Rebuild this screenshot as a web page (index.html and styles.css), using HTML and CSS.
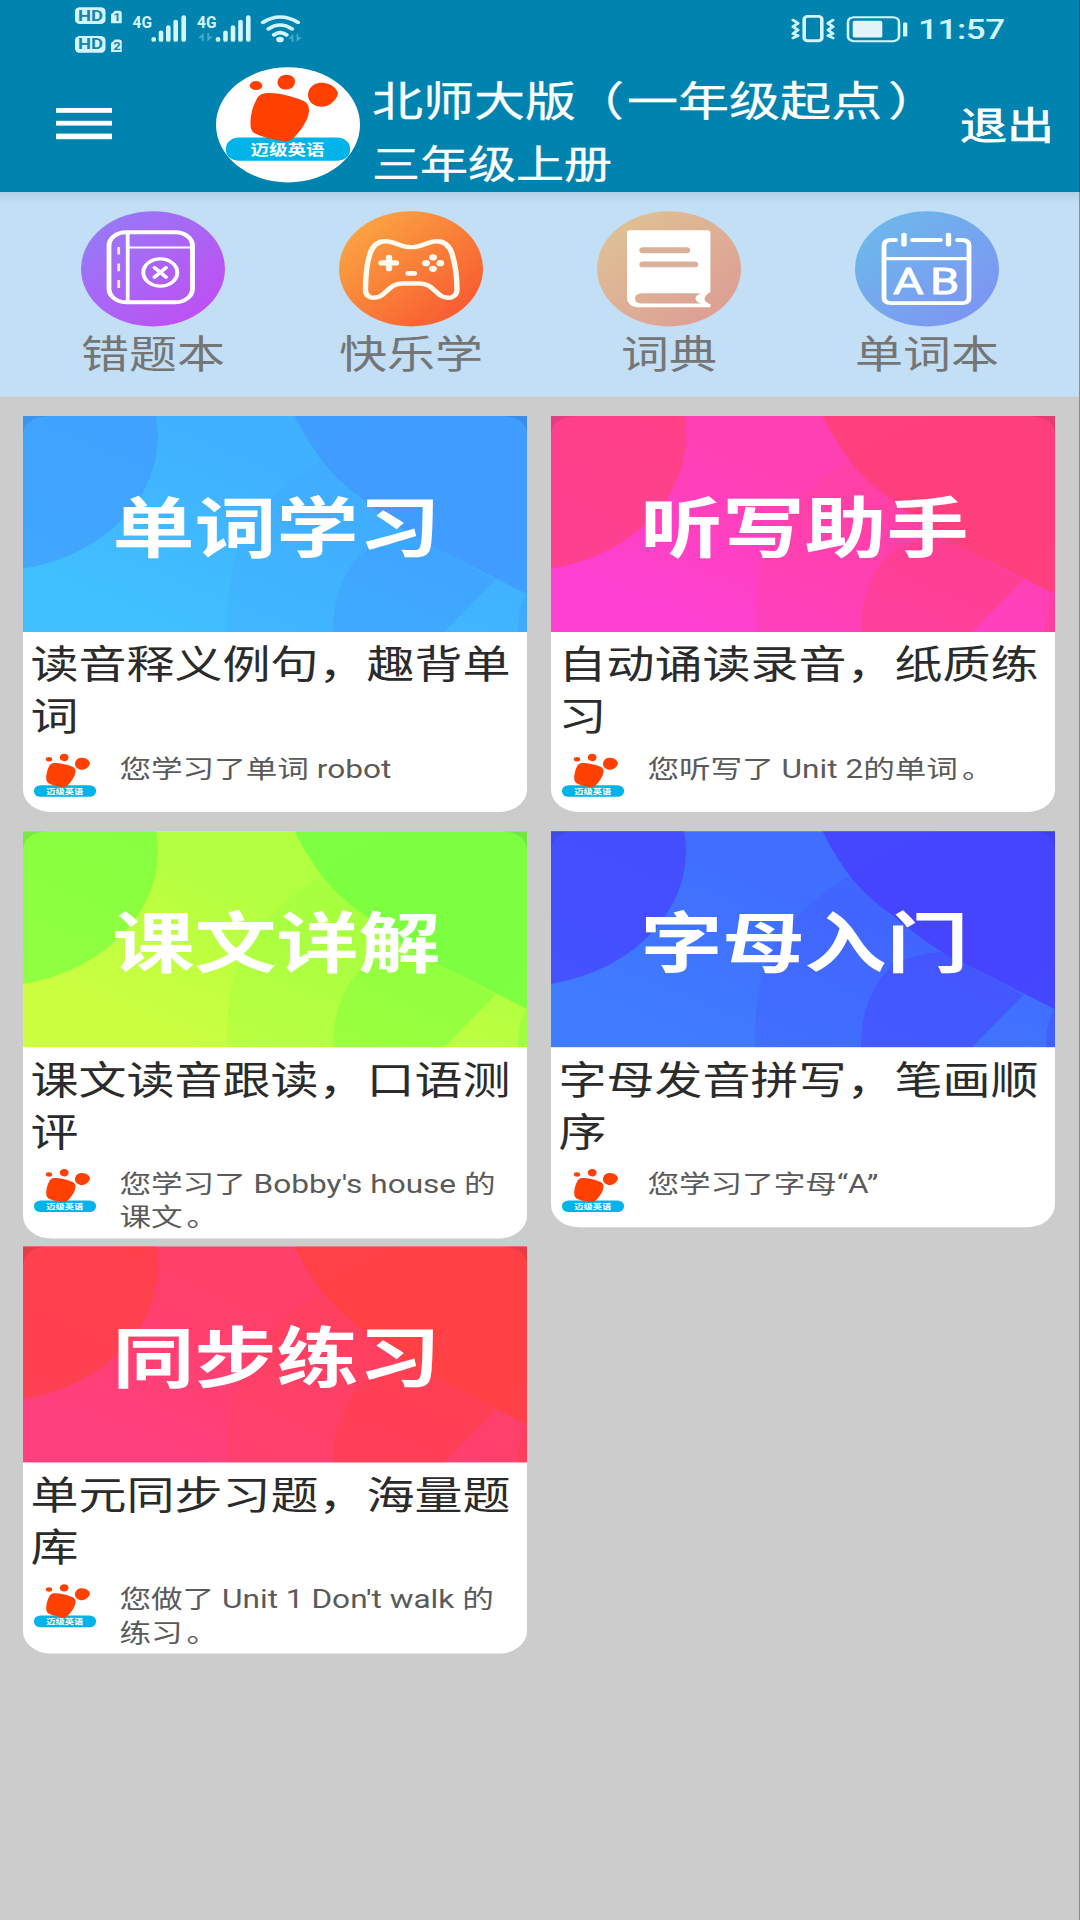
FILE: index.html
```html
<!DOCTYPE html>
<html lang="zh-CN">
<head>
<meta charset="utf-8">
<title>迈级英语</title>
<link rel="stylesheet" href="styles.css">
</head>
<body>
<svg class="defs" width="0" height="0" aria-hidden="true">
  <symbol id="logo" viewBox="0 0 144 144">
    <rect x="10" y="88" width="124" height="29" rx="13" fill="#00b4ea"/>
    <ellipse cx="40" cy="23" rx="6.3" ry="5.6" fill="#ff4000"/>
    <path d="M70 9.500c6 0 9 3.500 9 8.500s-3 10-8.500 10-9-4-9-9 3.500-9.500 8.500-9.500z" fill="#ff4000"/>
    <path d="M104 19.500C110 19 116 22 119 26C122 31 123 33 120.500 38C117 45 112 49.500 106 49.500C98 49.500 92 43 92 35C92 27 97 20 104 19.500z" fill="#ff4000"/>
    <path d="M54 32.300C62 32.300 74 36 82 39.500C90 42.500 93 46 93 54C93 66 83 82 77 89C73 93.500 68 93 60 91C52 89 45 87 39 83C34 79 34.500 73 34.500 67C35 57 37 48 41 39C44 33.500 47 32.300 54 32.300z" fill="#ff4000"/>
    <text class="logo-text" x="71.500" y="109.500" text-anchor="middle">迈级英语</text>
  </symbol>
  <symbol id="waves" viewBox="0 0 504 270" preserveAspectRatio="none">
    <circle cx="-34.600" cy="25" r="169.600" opacity=".66"/>
    <path d="M383 0C350 13 322 32 298 55C285 68 270 78 259 92C240 113 226 136 217 160C208 185 204 215 204 270H421L472 205L504 160V0z" opacity=".17"/>
    <path d="M271.600 0C276 12 287 36 298.500 55C308 71 325 91 341.500 105C361 126 385 149 410 163L504 222.500V0z" opacity=".78"/>
    <path d="M421 270L472 205L410 163L392 151C370 152 350 160 338 172C321 195 310 225 310 270z" opacity=".38"/>
    <path d="M504 222.500C498 232 495 248 495 270H504z" opacity=".35"/>
    <path d="M0 0H25Q0 2 0 25zM504 0H479Q504 2 504 25z" fill="#102040" opacity=".11"/>
  </symbol>
  <symbol id="arrows" viewBox="0 0 16 12"><path d="M0 7L6 0V12H4V7zM16 5L10 12V0H12V5z"/></symbol>
</svg>

<div class="screen">
  <header class="header">
    <div class="status">
      <svg class="status-left" viewBox="0 0 320 80" width="320" height="80">
        <g fill="#d3f5ff">
          <rect x="75" y="9" width="30.500" height="21" rx="5"/>
          <rect x="75" y="45" width="30.500" height="21" rx="5"/>
          <path d="M111 18L115 13.500H119Q121.700 13.500 121.700 16V29H111z"/>
          <path d="M111 54L115 49.500H119Q121.700 49.500 121.700 52V65H111z"/>
        </g>
        <g class="hd">
          <text x="78" y="25.700" textLength="25" lengthAdjust="spacingAndGlyphs">HD</text>
          <text x="78" y="61.700" textLength="25" lengthAdjust="spacingAndGlyphs">HD</text>
        </g>
        <g class="sim">
          <text x="113.200" y="26.500">1</text>
          <text x="113.200" y="62.500">2</text>
        </g>
        <g class="net">
          <text x="132.500" y="34.700" textLength="19.500" lengthAdjust="spacingAndGlyphs">4G</text>
          <text x="197" y="34.700" textLength="19.500" lengthAdjust="spacingAndGlyphs">4G</text>
        </g>
        <g class="bars">
          <path d="M153.700 48.500V50M161 40.500V50M168.300 34V50M175.700 27V50M183.700 21.500V50"/>
          <path d="M218 48.500V50M225.500 40.500V50M233 34V50M240.500 27V50M248.300 21.500V50"/>
        </g>
        <g fill="none" stroke="#d3f5ff" stroke-width="4.500" stroke-linecap="round">
          <path d="M263 28Q280 14.500 298 28"/>
          <path d="M268.500 36Q280 26.500 292 36"/>
          <path d="M274 43.500Q280 38 286.500 43.500"/>
        </g>
        <ellipse cx="280" cy="49.300" rx="3.800" ry="3.500" fill="#d3f5ff"/>
        <g fill="#4aa9c7">
          <use href="#arrows" x="198" y="41" width="15" height="11"/>
          <use href="#arrows" x="288" y="42.500" width="14" height="10"/>
        </g>
      </svg>
      <svg class="status-right" viewBox="784 0 130 80" width="130" height="80">
        <g fill="none" stroke="#d3f5ff" stroke-linecap="round" stroke-linejoin="round">
          <rect x="804.200" y="20.500" width="17.600" height="30.500" rx="3.500" stroke-width="3.600"/>
          <path stroke-width="3.200" d="M793 25l5 4-5 4.500 5 4-5 4.500 5 2.500-5 3M833 25l-5 4 5 4.500-5 4 5 4.500-5 2.500 5 3"/>
          <rect x="848" y="21.500" width="51" height="30" rx="6" stroke-width="2.600"/>
        </g>
        <rect x="852.700" y="26" width="29.600" height="21" rx="2" fill="#e4f4fb"/>
        <rect x="903" y="28" width="4.300" height="17.500" rx="1.500" fill="#d3f5ff"/>
      </svg>
      <time class="clock">11:57</time>
    </div>
    <div class="bar">
      <div class="menu"><i></i><i></i><i></i></div>
      <svg class="avatar"><use href="#logo"/></svg>
      <div class="book">
        <div class="book-edition">北师大版<span class="paren-open">（</span>一年级起点<span class="paren-close">）</span></div>
        <div class="book-grade">三年级上册</div>
      </div>
      <div class="exit">退出</div>
    </div>
  </header>

  <nav class="tools">
    <div class="tool">
      <div class="disc purple">
        <svg viewBox="0 0 144 144" fill="none" stroke="#fff">
          <rect x="28" y="26.300" width="83.500" height="87.500" rx="17" stroke-width="4.800"/>
          <path d="M46.700 27V114" stroke-width="3.800"/>
          <path d="M47 45.400H111" stroke-width="2.400"/>
          <path d="M37.700 44.600V54M37.700 65.400V75M37.700 86V96" stroke-width="2.800" opacity=".85"/>
          <circle cx="79.300" cy="76.700" r="17" stroke-width="4"/>
          <path d="M73.500 70.500L85 82.500M85 70.500L73.500 82.500" stroke-width="4" stroke-linecap="round"/>
        </svg>
      </div>
      <span class="tool-name">错题本</span>
    </div>
    <div class="tool">
      <div class="disc orange">
        <svg viewBox="0 0 144 144" fill="none" stroke="#fffaf0" stroke-linecap="round">
          <path stroke-width="5.400" d="M50 38C59 40 63 45 72 45S86 40 94 38C104 36 110 42 113 53C116 65 118 80 118 98C118 107 111 110 104 107C96 103 93 90 80 90.400H64C51 90 48 103 40 107C33 110 26 107 26.500 98C26.500 80 28 65 31 53C34 42 40 36 50 38z"/>
          <path stroke-width="6.400" d="M42.500 64.600H57M50 57.500V71.800"/>
          <path stroke-width="6" d="M69.500 77.800H75"/>
          <g fill="#fffaf0" stroke="none"><circle cx="94" cy="57.800" r="3.900"/><circle cx="94" cy="72" r="3.900"/><circle cx="87" cy="65" r="3.900"/><circle cx="101.300" cy="65" r="3.900"/></g>
        </svg>
      </div>
      <span class="tool-name">快乐学</span>
    </div>
    <div class="tool">
      <div class="disc tan">
        <svg viewBox="0 0 144 144" fill="#fff" fill-rule="evenodd">
          <path d="M33 23.800H110.500Q113.400 23.800 113.400 27V101Q107.500 105.500 107.500 109.500T113.400 116.500V120H40Q30 119 30 108V27Q30 23.800 33 23.800zM45 102.500Q38 103 38 109T45 115.400H104Q98.500 113 98.500 109T104 102.500z"/>
          <path d="M46 48.800H89.500M46 66.500H97.500" stroke="#dbb099" stroke-width="7.400" stroke-linecap="round"/>
        </svg>
      </div>
      <span class="tool-name">词典</span>
    </div>
    <div class="tool">
      <div class="disc blue">
        <svg viewBox="0 0 144 144" fill="none" stroke="#fff" stroke-width="4.800" stroke-linecap="round">
          <path d="M40.500 36H36Q29 36 29 43V108Q29 115 36 115H107Q114 115 114 108V43Q114 36 107 36H102.500M57.500 36H85.500"/>
          <path d="M49 29.500V41.500M93.500 29.500V41.500" stroke-width="5.400"/>
          <path d="M29 59.200H114" stroke-width="4" stroke-linecap="butt"/>
          <text class="ab" x="38" y="104">A</text>
          <text class="ab" x="75" y="104">B</text>
        </svg>
      </div>
      <span class="tool-name">单词本</span>
    </div>
  </nav>

  <main class="cards">
    <article class="card sky">
      <div class="banner"><svg class="waves"><use href="#waves"/></svg><h2>单词学习</h2></div>
      <p class="desc">读音释义例句，趣背单词</p>
      <div class="recent"><svg class="mini"><use href="#logo"/></svg><p>您学习了单词 robot</p></div>
    </article>
    <article class="card pink">
      <div class="banner"><svg class="waves"><use href="#waves"/></svg><h2>听写助手</h2></div>
      <p class="desc">自动诵读录音，纸质练习</p>
      <div class="recent"><svg class="mini"><use href="#logo"/></svg><p>您听写了 Unit 2的单词<span class="stop">。</span></p></div>
    </article>
    <article class="card lime">
      <div class="banner"><svg class="waves"><use href="#waves"/></svg><h2>课文详解</h2></div>
      <p class="desc">课文读音跟读，口语测评</p>
      <div class="recent"><svg class="mini"><use href="#logo"/></svg><p>您学习了 Bobby's house 的课文<span class="stop">。</span></p></div>
    </article>
    <article class="card indigo">
      <div class="banner"><svg class="waves"><use href="#waves"/></svg><h2>字母入门</h2></div>
      <p class="desc">字母发音拼写，笔画顺序</p>
      <div class="recent"><svg class="mini"><use href="#logo"/></svg><p>您学习了字母“A”</p></div>
    </article>
    <article class="card red">
      <div class="banner"><svg class="waves"><use href="#waves"/></svg><h2>同步练习</h2></div>
      <p class="desc">单元同步习题，海量题库</p>
      <div class="recent"><svg class="mini"><use href="#logo"/></svg><p>您做了 Unit 1 Don't walk 的练习<span class="stop">。</span></p></div>
    </article>
  </main>
</div>
</body>
</html>
```
FILE: styles.css
```css
* { box-sizing: border-box; margin: 0; padding: 0; }

html { overflow: hidden; }

body {
  width: 1080px;
  height: 1920px;
  overflow: hidden;
  background: #ccc;
  font-family: Roboto, "Noto Sans CJK SC", sans-serif;
}

.defs { display: block; width: 0; height: 0; }

/* A 1080x2400 phone screen shown at 1080x1920 */
.screen {
  width: 1080px;
  height: 2400px;
  margin-bottom: -480px;
  background: #ccc;
  border-right: 1px solid #8c8c8c;
  transform: scaleY(0.8);
  transform-origin: 0 0;
}

/* Header */
.header {
  width: 1080px;
  height: 240px;
  background: #0084af;
  color: #fff;
  border-right: 1px solid #075f7d;
}
.status { display: flex; height: 80px; }
.status-right { margin-left: 464px; }
.clock {
  margin-left: 4px;
  font-size: 35px;
  font-weight: 500;
  line-height: 76px;
  color: #d3f5ff;
  letter-spacing: -0.4px;
}
.hd { font: 700 18px Roboto, sans-serif; fill: #1686ab; }
.sim { font: 700 13px Roboto, sans-serif; fill: #1686ab; }
.net { font: 700 20px Roboto, sans-serif; fill: #d3f5ff; }
.bars { fill: none; stroke: #d3f5ff; stroke-width: 4.6px; stroke-linecap: round; }

.bar { display: flex; height: 160px; }
.menu {
  display: flex;
  flex: none;
  flex-direction: column;
  gap: 10px;
  width: 56px;
  margin: 54.5px 104px 0 56px;
}
.menu i { height: 6.4px; background: #fff; }
.avatar {
  flex: none;
  width: 144px;
  height: 144px;
  margin-top: 4px;
  border-radius: 50%;
  background: #fff;
}
.logo-text { font: 700 18.5px "Noto Sans CJK SC", sans-serif; fill: #fff; }
.book { flex: none; width: 600px; padding: 9px 0 0 12px; white-space: nowrap; }
.book-edition { font-size: 51px; line-height: 78px; -webkit-text-stroke: 0.4px #fff; }
.book-grade { font-size: 48px; line-height: 78px; -webkit-text-stroke: 0.4px #fff; }
.paren-open { margin: 0 3px 0 -3px; }
.paren-close { margin-left: 6px; }
.exit {
  flex: none;
  font-size: 47px;
  line-height: 155px;
  -webkit-text-stroke: 1px #fff;
}

/* Shortcuts */
.tools {
  display: flex;
  height: 256px;
  padding: 24px 0 0 24px;
  background: linear-gradient(#b0d0e6, #c2dff6 14px);
}
.tool {
  display: flex;
  flex: none;
  flex-direction: column;
  align-items: center;
  width: 258px;
}
.disc { width: 144px; height: 144px; border-radius: 50%; }
.disc svg { display: block; }
.purple { background: linear-gradient(135deg, #9180f8, #c549f1); }
.orange { background: linear-gradient(135deg, #fbb044, #f84f2e); }
.tan { background: linear-gradient(135deg, #dfc694, #dc9994); }
.blue { background: linear-gradient(135deg, #6abdea, #8090f3); }
.ab { font: 400 47px Roboto, sans-serif; fill: #fff; stroke: #fff; stroke-width: 1px; }
.tool-name { font-size: 48px; line-height: 71px; color: #757575; }

/* Lesson cards */
.cards {
  display: grid;
  grid-template-columns: 504px 504px;
  grid-auto-rows: 495px;
  gap: 24px;
  align-items: start;
  padding: 24px 0 0 23.4px;
}
.card {
  min-height: 495px;
  background: #fff;
  border-radius: 0 0 28px 28px;
}
.banner {
  display: grid;
  height: 270px;
  background: linear-gradient(28deg, var(--light) 15%, var(--mid) 62%);
}
.banner > * { grid-area: 1 / 1; }
.waves { width: 504px; height: 270px; fill: var(--dark); }
.banner h2 {
  position: relative;
  padding: 7px 0 0 2px;
  text-align: center;
  font-size: 82px;
  font-weight: 700;
  line-height: 270px;
  color: #fff;
}
.sky { --light: #40c0ff; --mid: #40b1ff; --dark: #4099ff; }
.pink { --light: #ff40d2; --mid: #ff40b2; --dark: #ff3f70; }
.lime { --light: #ccff40; --mid: #b2ff40; --dark: #70ff40; }
.indigo { --light: #407cff; --mid: #406eff; --dark: #463cff; }
.red { --light: #ff407e; --mid: #ff4068; --dark: #ff403c; }

.desc {
  padding: 10px 6px 0 7px;
  font-size: 48px;
  line-height: 64.5px;
  color: #2b2b2b;
}
.recent { display: flex; padding: 7.5px 16px 0 6px; }
.mini { flex: none; width: 72px; height: 73px; }
.recent p {
  margin: 4.5px 0 0 18px;
  padding-bottom: 4px;
  font-size: 31.6px;
  line-height: 42px;
  color: #5a5a5a;
}
.stop { margin-left: 4px; }
```
